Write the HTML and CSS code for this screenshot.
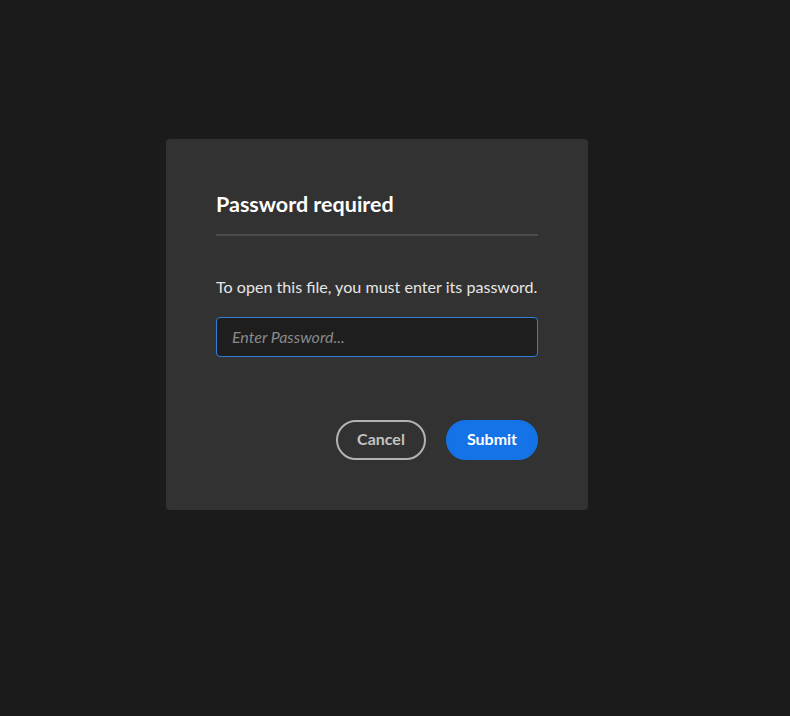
FILE: index.html
```html
<!DOCTYPE html>
<html lang="en">
<head>
<meta charset="utf-8">
<title>Password required</title>
<link rel="stylesheet" href="styles.css">
</head>
<body>
<div class="page">
  <section class="dialog">
    <h1 class="title">Password required</h1>
    <hr class="divider">
    <p class="message">To open this file, you must enter its password.</p>
    <input class="field" type="password" placeholder="Enter Password...">
    <div class="actions">
      <button class="btn btn-secondary" type="button">Cancel</button>
      <button class="btn btn-primary" type="button">Submit</button>
    </div>
  </section>
</div>
</body>
</html>
```

FILE: styles.css
```css
html, body {
  margin: 0;
  padding: 0;
  background: #1b1b1b;
  font-family: "Lato", "Open Sans", sans-serif;
}
.page {
  width: 790px;
  height: 716px;
  padding-top: 139px;
  padding-left: 166px;
  box-sizing: border-box;
}
.dialog {
  width: 422px;
  height: 371px;
  box-sizing: border-box;
  background: #323232;
  border-radius: 4px;
  padding: 50px 50px 50px;
  display: flex;
  flex-direction: column;
}
.title {
  margin: 0;
  height: 30px;
  font-size: 21.5px;
  font-weight: 700;
  color: #ffffff;
  line-height: 30px;
}
.divider {
  margin: 15px 0 0;
  border: 0;
  height: 2px;
  background: #4b4b4b;
}
.message {
  margin: 41px 0 0;
  font-size: 16.1px;
  line-height: 20px;
  color: #e6e6e6;
}
.field {
  margin-top: 20px;
  height: 40px;
  box-sizing: border-box;
  background: #1e1e1e;
  border: 1px solid #2e7fdc;
  border-radius: 4px;
  padding: 0 15px 2px;
  font-family: inherit;
  font-size: 16px;
  color: #e6e6e6;
  outline: none;
}
.field::placeholder {
  color: #8a8a8a;
  font-style: italic;
}
.actions {
  margin-top: auto;
  display: flex;
  justify-content: flex-end;
  gap: 20px;
}
.btn {
  height: 40px;
  border-radius: 20px;
  font-family: inherit;
  font-size: 16px;
  font-weight: 700;
  padding: 0 18px 3px;
  box-sizing: border-box;
  cursor: pointer;
}
.btn-secondary {
  width: 90px;
  background: transparent;
  border: 2px solid #b3b3b3;
  color: #c3c3c3;
}
.btn-primary {
  width: 92px;
  background: #1473e6;
  border: 2px solid #1473e6;
  color: #ffffff;
}
```
